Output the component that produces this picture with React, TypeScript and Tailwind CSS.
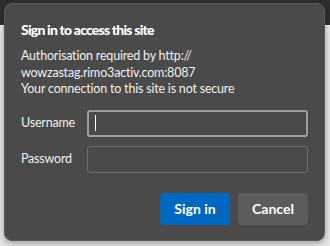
import React from "react";

export default function App() {
  return (
    <div
      className="relative w-[330px] h-[246px] overflow-hidden bg-[#e6e6e6]"
      style={{ fontFamily: 'Lato, "Noto Sans", sans-serif' }}
    >
      <div className="absolute left-0 top-0 w-full h-[25px] bg-[#2f2f2f]" />
      <div className="absolute left-0 top-[25px] w-full h-[1px] bg-[#f5f5f5]" />
      <div className="absolute left-[4px] top-[3px] w-[321px] h-[238px] rounded-[8px] bg-[#4a4a4a] border border-[#5a5a5a] shadow-[0_2px_6px_rgba(0,0,0,0.35)] flex flex-col px-[16px] pt-[15px]">
        <div className="text-white font-black text-[14px] leading-[22px] tracking-[-0.8px]">
          Sign in to access this site
        </div>
        <div className="mt-[7px] text-[#f0f0f0] text-[12.5px] leading-[16.5px] tracking-[-0.2px]">
          <div>Authorisation required by http://</div>
          <div>wowzastag.rimo3activ.com:8087</div>
          <div>Your connection to this site is not secure</div>
        </div>
        <div className="mt-[12px] flex flex-col gap-[9px]">
          <div className="flex items-center">
            <div className="w-[66px] text-[#f0f0f0] text-[12.5px] tracking-[-0.2px]">Username</div>
            <div className="w-[222px] h-[27px] border-2 border-[#9b9d9f] rounded-[3px] bg-[#4a4a4a] flex items-center pl-[6px]">
              <div className="w-[1px] h-[16px] bg-white" />
            </div>
          </div>
          <div className="flex items-center">
            <div className="w-[66px] text-[#f0f0f0] text-[12.5px] tracking-[-0.2px]">Password</div>
            <div className="w-[222px] h-[27px] border border-[#6e6e6e] rounded-[3px] bg-[#4a4a4a]" />
          </div>
        </div>
        <div className="mt-[20px] flex justify-end gap-[8px]">
          <button className="w-[70px] h-[32px] rounded-[4px] bg-[#0067c0] text-white text-[14px] font-bold">
            Sign in
          </button>
          <button className="w-[70px] h-[32px] rounded-[4px] bg-[#5c5c5c] text-white text-[14px] font-bold">
            Cancel
          </button>
        </div>
      </div>
    </div>
  );
}
